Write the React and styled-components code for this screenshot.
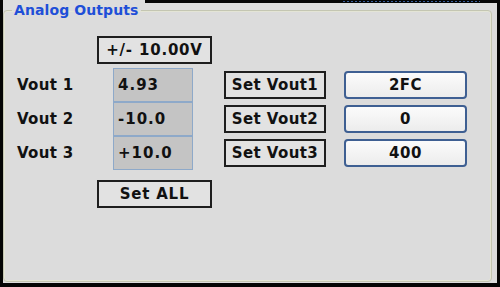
import styled, { createGlobalStyle } from 'styled-components';

const GlobalStyle = createGlobalStyle`
  html, body {
    margin: 0;
    padding: 0;
    background: #dcdcdc;
  }
  body {
    font-family: "DejaVu Sans", "Liberation Sans", sans-serif;
  }
`;

const channels = [
  { label: 'Vout 1', value: '4.93', set: 'Set Vout1', hex: '2FC' },
  { label: 'Vout 2', value: '-10.0', set: 'Set Vout2', hex: '0' },
  { label: 'Vout 3', value: '+10.0', set: 'Set Vout3', hex: '400' },
];

export default function App() {
  return (
    <>
      <GlobalStyle />
      <Frame>
        <Group>
          <Title>Analog Outputs</Title>
          <RangeRow>
            <FlatBox>+/- 10.00V</FlatBox>
          </RangeRow>

          <Channels>
            {channels.map((ch) => (
              <ChannelRow key={ch.label}>
                <Label>{ch.label}</Label>
                <ValueBox>{ch.value}</ValueBox>
                <SetButton>{ch.set}</SetButton>
                <HexButton>{ch.hex}</HexButton>
              </ChannelRow>
            ))}
          </Channels>

          <RangeRow>
            <FlatBox as="button">Set ALL</FlatBox>
          </RangeRow>
        </Group>
      </Frame>
    </>
  );
}

// ---------------- frame ------------------------
const Frame = styled.div`
  box-sizing: border-box;
  width: 500px;
  height: 287px;
  border-left: 3px solid #050505;
  border-right: 3px solid #050505;
  border-bottom: 4px solid #050505;
  background:
    repeating-linear-gradient(to right, #3c5f9c 0 2px, transparent 2px 4px) 340px 1px / 137px 1px no-repeat,
    linear-gradient(#050505, #050505) 142px 0 / 100% 3px no-repeat,
    #dcdcdc;
`;

const Group = styled.fieldset`
  box-sizing: border-box;
  height: 282px;
  margin: 0 5px 1px 0;
  padding: 0 0 0 13px;
  border: 1px solid #c4c6b2;
  border-radius: 4px;
  box-shadow: inset 0 0 0 1px #e4e5d6;
  min-width: 0;
`;

const Title = styled.legend`
  margin-left: -5px;
  padding: 0 2px;
  font-size: 14px;
  line-height: 20px;
  font-weight: bold;
  color: #1f4fd8;
  letter-spacing: 0.1px;
`;

// ---------------- rows ------------------------
const RangeRow = styled.div`
  display: flex;
  padding-left: 80px;
  margin-top: 16px;

  & + div {
    margin-top: 4px;
  }
`;

const Channels = styled.div`
  display: flex;
  flex-direction: column;

  & + div {
    margin-top: 10px;
  }
`;

const ChannelRow = styled.div`
  display: flex;
  align-items: center;
  height: 34px;
`;

const Label = styled.div`
  width: 96px;
  font-size: 15px;
  font-weight: bold;
  color: #111;
  letter-spacing: 0.3px;
`;

const ValueBox = styled.div`
  box-sizing: border-box;
  width: 80px;
  height: 34px;
  padding-left: 4px;
  display: flex;
  align-items: center;
  background: #c4c4c4;
  border: 1px solid #8ea9c9;
  font-size: 15px;
  font-weight: bold;
  color: #111;
  letter-spacing: 1px;
`;

const FlatBox = styled.div`
  box-sizing: border-box;
  width: 115px;
  height: 28px;
  display: flex;
  align-items: center;
  justify-content: center;
  padding: 0;
  background: #e2e2e2;
  border: 2px solid #1e1e1e;
  font-family: inherit;
  font-size: 15px;
  font-weight: bold;
  color: #111;
  letter-spacing: 0.8px;
`;

const SetButton = styled.button`
  box-sizing: border-box;
  width: 102px;
  height: 28px;
  margin-left: 31px;
  padding: 0;
  background: #e2e2e2;
  border: 2px solid #1e1e1e;
  font-family: inherit;
  font-size: 15px;
  font-weight: bold;
  color: #111;
  letter-spacing: 0.4px;
`;

const HexButton = styled.button`
  box-sizing: border-box;
  width: 123px;
  height: 28px;
  margin-left: 18px;
  padding: 0;
  background: linear-gradient(#fbfbfb, #ececec);
  border: 2px solid #3e5f92;
  border-radius: 4px;
  font-family: inherit;
  font-size: 15px;
  font-weight: bold;
  color: #111;
  letter-spacing: 0.5px;
`;
